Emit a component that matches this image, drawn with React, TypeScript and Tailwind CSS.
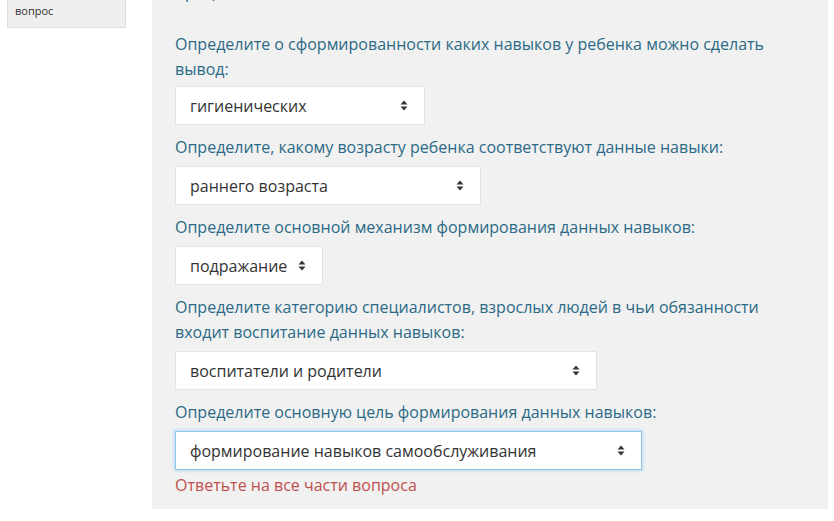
import React from "react";

const font = { fontFamily: '"Open Sans", "Noto Sans", sans-serif' };

function SortArrows() {
  return (
    <svg width="8" height="11" viewBox="0 0 8 11" className="shrink-0">
      <path d="M4 0.5 L7.5 4.5 H0.5 Z" fill="#333" />
      <path d="M4 10.5 L7.5 6.5 H0.5 Z" fill="#333" />
    </svg>
  );
}

function Select({
  value,
  width,
  focused = false,
}: {
  value: string;
  width: string;
  focused?: boolean;
}) {
  return (
    <div
      className={
        "flex h-[39px] items-center justify-between bg-white pl-[14px] pr-[16px] text-[16px] text-[#333] " +
        width +
        (focused
          ? " border border-[#8cc7ee] shadow-[0_0_3px_1px_rgba(120,190,240,0.45)]"
          : " border border-[#e3e3e3]")
      }
    >
      <span className="whitespace-nowrap">{value}</span>
      <SortArrows />
    </div>
  );
}

function Label({ children, first = false }: { children: React.ReactNode; first?: boolean }) {
  return (
    <p
      className={
        "text-[16px] leading-[25px] text-[#2b6a86] " +
        (first ? "mb-[4px] mt-[27px]" : "mb-[6px] mt-[10px]")
      }
    >
      {children}
    </p>
  );
}

export default function App() {
  return (
    <div className="flex min-h-[521px] bg-white" style={font}>
      <div className="ml-[7px] w-[119px] shrink-0">
        <div className="h-[28px] border border-t-0 border-[#dcdcdc] bg-[#eeeeee] pl-[7px] pt-[2px] text-[11px] leading-[18px] text-[#333]">
          вопрос
        </div>
      </div>
      <div className="ml-[26px] h-[509px] w-[676px] shrink-0 overflow-hidden bg-[#f1f1f1] pl-[23px] pr-[40px]">
        <p className="-mt-[20px] h-[25px] text-[16px] leading-[25px] text-[#2b6a86]">процесса:</p>
        <Label first>
          Определите о сформированности каких навыков у ребенка можно сделать
          вывод:
        </Label>
        <Select value="гигиенических" width="w-[250px]" />
        <Label>Определите, какому возрасту ребенка соответствуют данные навыки:</Label>
        <Select value="раннего возраста" width="w-[306px]" />
        <Label>Определите основной механизм формирования данных навыков:</Label>
        <Select value="подражание" width="w-[148px]" />
        <Label>
          Определите категорию специалистов, взрослых людей в чьи обязанности
          входит воспитание данных навыков:
        </Label>
        <Select value="воспитатели и родители" width="w-[422px]" />
        <Label>Определите основную цель формирования данных навыков:</Label>
        <Select value="формирование навыков самообслуживания" width="w-[467px]" focused />
        <p className="mt-[3px] text-[16px] leading-[25px] text-[#c0504d]">
          Ответьте на все части вопроса
        </p>
      </div>
    </div>
  );
}
